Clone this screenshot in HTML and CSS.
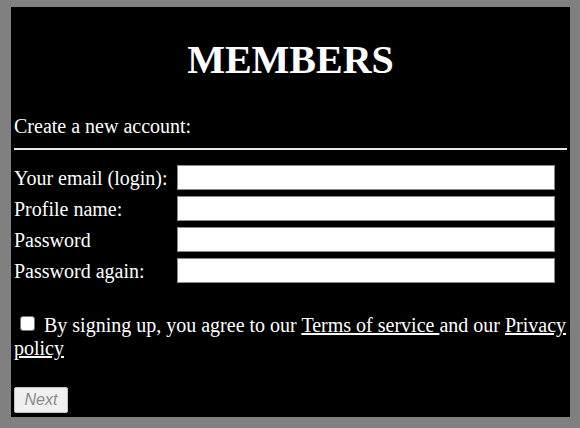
FILE: index.html
```html
<!DOCTYPE html>
<html lang="en">
<head>
<meta charset="utf-8">
<title>Members</title>
<link rel="stylesheet" href="styles.css">
</head>
<body>
<div class="panel">
  <h1 class="title">MEMBERS</h1>
  <div class="intro">Create a new account:</div>
  <hr class="rule">
  <form class="form">
    <div class="fields">
      <label class="label" for="email">Your email (login):</label>
      <input class="field" id="email" type="text">
      <label class="label" for="name">Profile name:</label>
      <input class="field" id="name" type="text">
      <label class="label" for="pw">Password</label>
      <input class="field" id="pw" type="password">
      <label class="label" for="pw2">Password again:</label>
      <input class="field" id="pw2" type="password">
    </div>
    <p class="agree"><input class="check" type="checkbox"> By signing up, you agree to our <a class="link" href="#">Terms of service </a>and our <a class="link" href="#">Privacy policy</a></p>
    <button class="next" type="button" disabled>Next</button>
  </form>
</div>
</body>
</html>
```
FILE: styles.css
```css
html, body {
  margin: 0;
  padding: 0;
  background: #808080;
}
body {
  font-family: "Liberation Serif", "Times New Roman", serif;
  font-size: 20px;
  color: #fff;
}
.panel {
  box-sizing: border-box;
  width: 559px;
  height: 410px;
  margin: 7px 10px 0 11px;
  padding: 3px;
  background: #000;
}
.title {
  margin: 27px 0 0;
  font-size: 40px;
  line-height: 46px;
  font-weight: bold;
  text-align: center;
}
.intro {
  margin-top: 32px;
  line-height: 23px;
}
.rule {
  margin: 10px 0 0;
  border: none;
  border-top: 2px solid #e8e8e8;
  height: 0;
}
.form {
  margin: 0;
}
.fields {
  display: grid;
  grid-template-columns: 163px 378px;
  row-gap: 6px;
  align-items: center;
  margin-top: 15px;
}
.label {
  line-height: 23px;
  padding-top: 1px;
}
.field {
  box-sizing: border-box;
  width: 378px;
  height: 25px;
  margin: 0;
  border: 1px solid #8a8a8a;
  background: #fff;
  font-size: 16px;
}
.agree {
  margin: 31px 0 0;
  line-height: 23px;
}
.check {
  -webkit-appearance: none;
  appearance: none;
  box-sizing: border-box;
  display: inline-block;
  width: 15px;
  height: 15px;
  margin: 0 4px 1px 6px;
  padding: 0;
  border: 1px solid #767676;
  border-radius: 3px;
  background: #fff;
  vertical-align: baseline;
}
.link {
  color: #fff;
  text-decoration: underline;
}
.next {
  display: block;
  box-sizing: border-box;
  width: 54px;
  height: 26px;
  margin-top: 27px;
  padding: 0;
  background: #f0f0f0;
  border: 1px solid #c4c4c4;
  border-radius: 2px;
  color: #8a8a8a;
  font-family: "Liberation Sans", Arial, sans-serif;
  font-size: 16px;
  font-style: italic;
}
```
